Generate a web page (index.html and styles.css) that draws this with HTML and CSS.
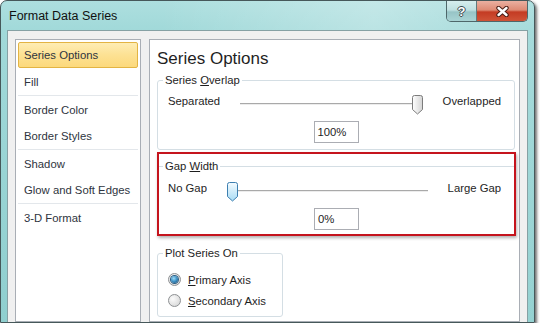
FILE: index.html
```html
<!DOCTYPE html>
<html lang="en">
<head>
  <meta charset="UTF-8" />
  <title>Format Data Series</title>
  <link rel="stylesheet" href="styles.css">
</head>
<body>
  <div class="window">
    <div class="titlebar">
      <span class="title">Format Data Series</span>
      <div class="caption-buttons">
        <span class="cap-btn help">?</span>
        <span class="cap-btn close">
          <svg width="13" height="11" viewBox="0 0 13 11">
            <path d="M2.5 2 L10.5 9 M10.5 2 L2.5 9" stroke="#4a1e16" stroke-width="4.4" stroke-linecap="round" />
            <path d="M2.5 2 L10.5 9 M10.5 2 L2.5 9" stroke="#fff" stroke-width="2.4" stroke-linecap="round" />
          </svg>
        </span>
      </div>
    </div>

    <div class="client">
      <div class="nav">
        <div class="nav-group">
          <div class="nav-item selected">Series Options</div>
          <div class="nav-item">Fill</div>
        </div>
        <div class="nav-group">
          <div class="nav-item">Border Color</div>
          <div class="nav-item">Border Styles</div>
        </div>
        <div class="nav-group">
          <div class="nav-item">Shadow</div>
          <div class="nav-item">Glow and Soft Edges</div>
        </div>
        <div class="nav-group">
          <div class="nav-item">3-D Format</div>
        </div>
      </div>

      <div class="panel">
        <h1 class="panel-title">Series Options</h1>

        <fieldset class="group">
          <legend>Series <u>O</u>verlap</legend>
          <div class="slider-row">
            <span>Separated</span>
            <div class="slider at-max">
              <svg class="thumb" width="11" height="20" viewBox="0 0 11 20">
                <defs>
                  <linearGradient id="thumbGrey" x1="0" y1="0" x2="1" y2="0">
                    <stop offset="0" stop-color="#ffffff" />
                    <stop offset="1" stop-color="#d4d4d4" />
                  </linearGradient>
                </defs>
                <path d="M0.5 2.5 Q0.5 0.5 2.5 0.5 H8.5 Q10.5 0.5 10.5 2.5 V14.5 L5.5 19 L0.5 14.5 Z" fill="url(#thumbGrey)" stroke="#7c7c7c" />
              </svg>
            </div>
            <span>Overlapped</span>
          </div>
          <div class="value-box">100%</div>
        </fieldset>

        <div class="callout">
          <fieldset class="group group-flat">
            <legend>Gap <u>W</u>idth</legend>
            <div class="slider-row">
              <span>No Gap</span>
              <div class="slider">
                <svg class="thumb" width="11" height="20" viewBox="0 0 11 20">
                  <defs>
                    <linearGradient id="thumbBlue" x1="0" y1="0" x2="0" y2="1">
                      <stop offset="0" stop-color="#f4fbff" />
                      <stop offset="1" stop-color="#a9dcf5" />
                    </linearGradient>
                  </defs>
                  <path d="M0.5 2.5 Q0.5 0.5 2.5 0.5 H8.5 Q10.5 0.5 10.5 2.5 V14.5 L5.5 19 L0.5 14.5 Z" fill="url(#thumbBlue)" stroke="#3d7fb0" />
                </svg>
              </div>
              <span>Large Gap</span>
            </div>
            <div class="value-box">0%</div>
          </fieldset>
        </div>

        <fieldset class="group group-plot">
          <legend>Plot Series On</legend>
          <div class="radio-list">
            <div class="radio-row"><span class="radio checked"></span><span><u>P</u>rimary Axis</span></div>
            <div class="radio-row"><span class="radio"></span><span><u>S</u>econdary Axis</span></div>
          </div>
        </fieldset>
      </div>
    </div>
  </div>
</body>
</html>
```

FILE: styles.css
```css
body {
  margin: 0;
  background: #fff;
  font-family: "Liberation Sans", Arial, sans-serif;
  font-size: 11.3px;
  color: #1e1e1e;
}

.window {
  width: 535px;
  height: 323px;
  box-sizing: border-box;
  display: flex;
  flex-direction: column;
  padding: 0 6px;
  border: 1px solid #46585a;
  border-radius: 7px 7px 0 0;
  background:
    linear-gradient(90deg, rgba(255, 255, 255, 0) 30%, rgba(255, 255, 255, 0.28) 70%, rgba(255, 255, 255, 0.05) 100%),
    linear-gradient(180deg, #addfdf 0, #a1d9d9 30px, #8fcfcf 100%);
  box-shadow: 2px 2px 3px rgba(0, 0, 0, 0.55);
  overflow: hidden;
}

/* title bar */

.titlebar {
  height: 29px;
  flex-shrink: 0;
  display: flex;
  justify-content: space-between;
  align-items: flex-start;
}

.title {
  padding: 8px 0 0 2px;
  font-size: 12.5px;
  line-height: 14px;
  color: #111;
}

.caption-buttons {
  display: flex;
  height: 20px;
  border: 1px solid #4e676a;
  border-top: none;
  border-radius: 0 0 5px 5px;
  overflow: hidden;
}

.cap-btn {
  display: flex;
  align-items: center;
  justify-content: center;
}

.help {
  width: 29px;
  border-right: 1px solid #5f7a7d;
  background: linear-gradient(180deg, #d6eeee 0, #bfe0e1 45%, #97c4c6 55%, #a9d4d5 100%);
  color: #fff;
  font-weight: bold;
  font-size: 13px;
  text-shadow: -1px 0 #3d4c4e, 1px 0 #3d4c4e, 0 -1px #3d4c4e, 0 1px #3d4c4e;
}

.close {
  width: 50px;
  background: linear-gradient(180deg, #eab0a1 0, #de8a74 45%, #c43b23 55%, #cf5337 100%);
}

/* client area */

.client {
  flex: 1;
  min-height: 0;
  display: flex;
  gap: 8px;
  padding: 8px 7px 0;
  background: #f0f0f0;
  border: 1px solid #86a1a4;
  border-bottom: none;
}

.nav {
  width: 126px;
  box-sizing: border-box;
  flex-shrink: 0;
  padding-top: 2px;
  background: #fff;
  border: 1px solid #a9aeb5;
}

.nav-group + .nav-group {
  margin: 0 2px;
  padding-top: 1px;
  border-top: 1px solid #e3e7eb;
}

.nav-group + .nav-group .nav-item {
  margin: 0;
}

.nav-item {
  margin: 0 2px;
  padding: 0 5px;
  line-height: 24px;
  border: 1px solid transparent;
  border-radius: 2px;
  color: #2e3440;
  white-space: nowrap;
}

.nav-item.selected {
  margin-bottom: 1px;
  border-color: #e3b443;
  background: linear-gradient(180deg, #feedb4 0, #fde193 50%, #fcd97c 100%);
}

.panel {
  flex: 1;
  padding: 9px 4px 10px 7px;
  background: #fff;
  border: 1px solid #a9aeb5;
}

.panel-title {
  margin: 0;
  font-size: 17px;
  font-weight: normal;
  line-height: 20px;
  color: #1f1f1f;
}

/* groups */

.group {
  margin: 4px 0 0;
  padding: 0 0 6px;
  min-width: 0;
  border: 1px solid #d4dee4;
  border-radius: 3px;
}

.group legend {
  margin-left: 5px;
  padding: 0 2px;
  line-height: 14px;
}

.slider-row {
  display: flex;
  align-items: flex-start;
  gap: 20px;
  padding: 7px 13px 0 10px;
  line-height: 14px;
  white-space: nowrap;
}

.slider {
  flex: 1;
  height: 20px;
  margin-top: 1px;
  display: flex;
  background:
    linear-gradient(#a9a9a9, #a9a9a9) no-repeat 0 8px / 100% 1px,
    linear-gradient(#ececec, #ececec) no-repeat 0 9px / 100% 1px;
}

.slider.at-max {
  justify-content: flex-end;
}

.thumb {
  display: block;
}

.value-box {
  width: 45px;
  height: 22px;
  box-sizing: border-box;
  margin: 6px auto 0;
  padding-left: 3px;
  line-height: 20px;
  border: 1px solid #abadb3;
  background: #fff;
}

.callout {
  margin: 2px -1px 0 0;
  border: 2px solid #c5141d;
  box-shadow: 1px 2px 3px rgba(0, 0, 0, 0.3);
}

.group-flat {
  margin-top: 5px;
  padding-bottom: 4px;
  border-width: 1px 0 0;
  border-radius: 0;
}

.group-flat legend {
  margin-left: 4px;
}

.group-flat .slider-row {
  padding: 8px 13px 0 9px;
}

.group-plot {
  width: 126px;
  box-sizing: border-box;
  margin-top: 10px;
  padding-bottom: 5px;
}

.radio-list {
  padding: 9px 0 0 10px;
}

.radio-row {
  display: flex;
  align-items: center;
  gap: 7px;
  height: 21px;
  white-space: nowrap;
}

.radio {
  width: 13px;
  height: 13px;
  box-sizing: border-box;
  display: flex;
  align-items: center;
  justify-content: center;
  border: 1px solid #8d9092;
  border-radius: 50%;
  background: radial-gradient(circle at 35% 35%, #fbfbfb 0, #e4e4e4 55%, #cfd1d2 100%);
}

.radio.checked::after {
  content: "";
  width: 7px;
  height: 7px;
  border-radius: 50%;
  background: radial-gradient(circle at 40% 35%, #9fdcf8 0, #3a8fc4 50%, #16486f 100%);
  box-shadow: 0 0 0 1px #2b5d83;
}
```
